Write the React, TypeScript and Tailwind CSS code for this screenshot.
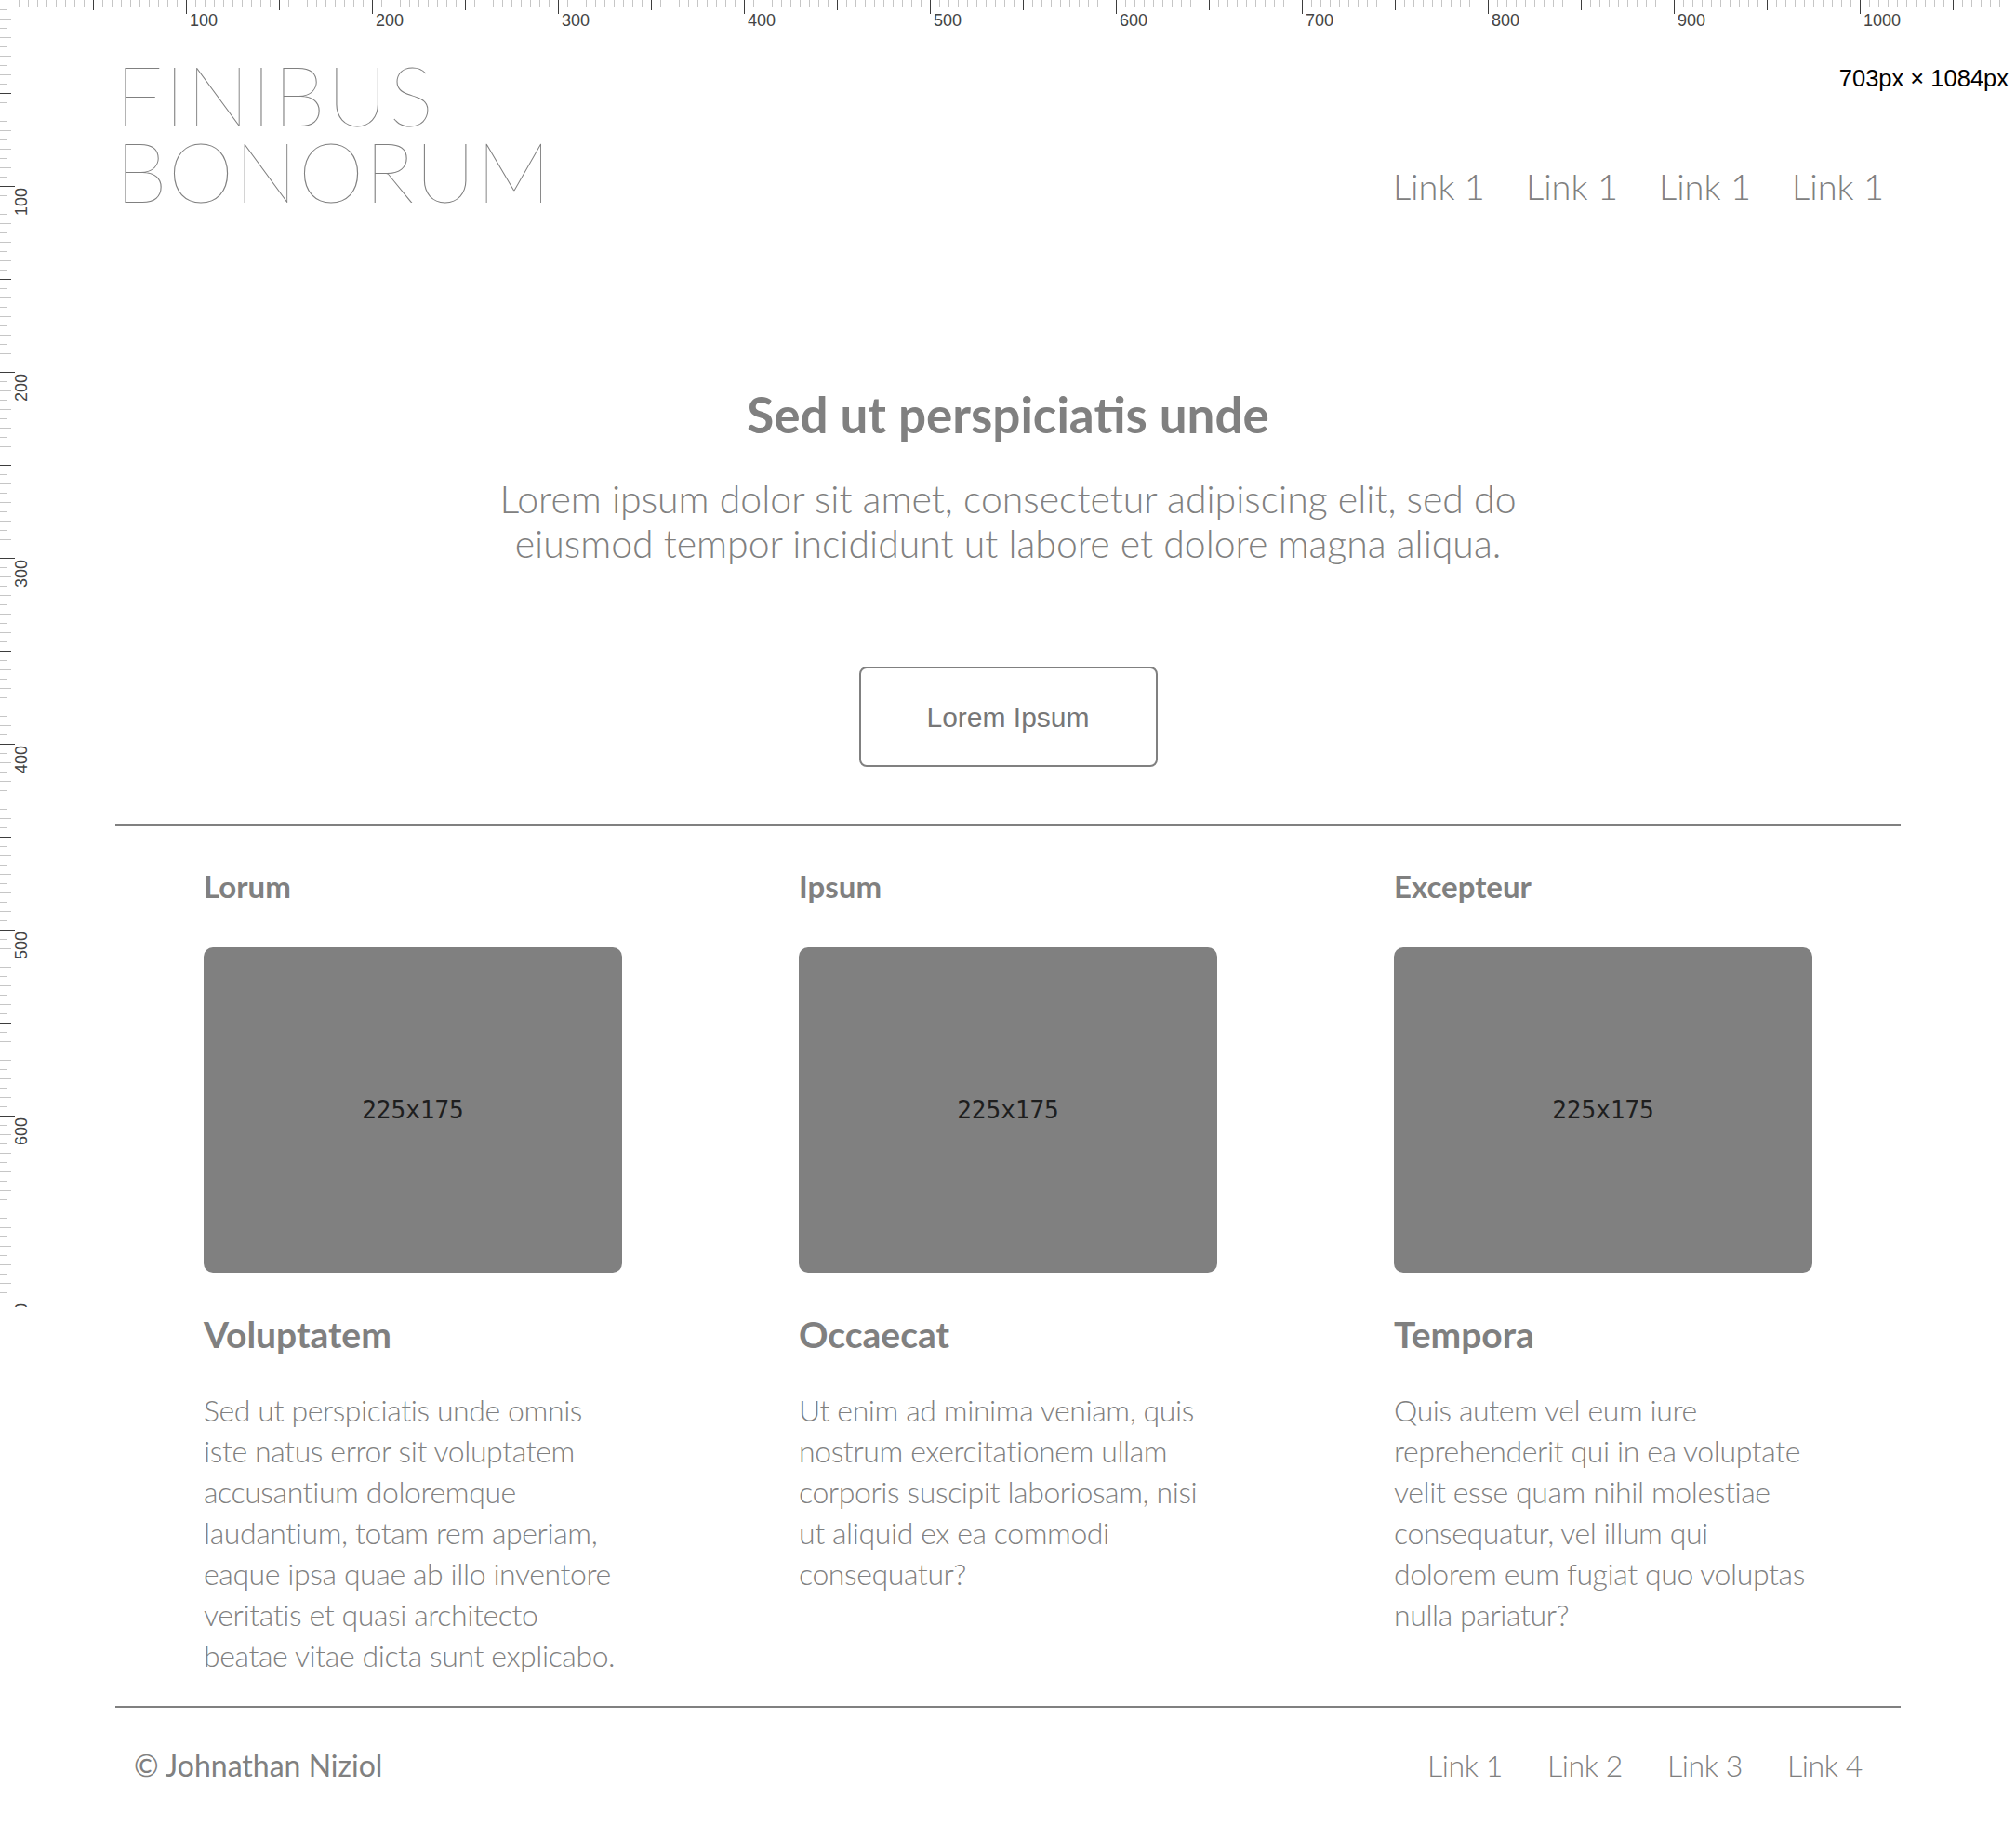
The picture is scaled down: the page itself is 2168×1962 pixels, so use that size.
import React from 'react'

const navLinks = ['Link 1', 'Link 1', 'Link 1', 'Link 1']
const footerLinks = ['Link 1', 'Link 2', 'Link 3', 'Link 4']

const columns = [
  {
    label: 'Lorum',
    title: 'Voluptatem',
    text: 'Sed ut perspiciatis unde omnis iste natus error sit voluptatem accusantium doloremque laudantium, totam rem aperiam, eaque ipsa quae ab illo inventore veritatis et quasi architecto beatae vitae dicta sunt explicabo.',
  },
  {
    label: 'Ipsum',
    title: 'Occaecat',
    text: 'Ut enim ad minima veniam, quis nostrum exercitationem ullam corporis suscipit laboriosam, nisi ut aliquid ex ea commodi consequatur?',
  },
  {
    label: 'Excepteur',
    title: 'Tempora',
    text: 'Quis autem vel eum iure reprehenderit qui in ea voluptate velit esse quam nihil molestiae consequatur, vel illum qui dolorem eum fugiat quo voluptas nulla pariatur?',
  },
]

// dev-tools style rulers drawn over the page
function TopRuler() {
  const ticks = []
  for (let x = 20; x <= 2160; x += 10) {
    const major = x % 200 === 0
    const mid = x % 100 === 0
    ticks.push(
      <line
        key={x}
        x1={x + 0.5}
        x2={x + 0.5}
        y1={0}
        y2={major ? 15 : mid ? 11 : 7}
        stroke={major || mid ? '#3d3d3d' : '#c6c6c6'}
        strokeWidth={1}
      />
    )
    if (major) {
      ticks.push(
        <text key={'t' + x} x={x + 4} y={28} fontSize={18} fill="#444" fontFamily="'Liberation Sans', Arial, sans-serif">
          {x / 2}
        </text>
      )
    }
  }
  return (
    <svg className="absolute top-0 left-0 pointer-events-none" width={2168} height={32}>
      {ticks}
    </svg>
  )
}

function LeftRuler() {
  const ticks = []
  for (let y = 10; y <= 1400; y += 10) {
    const major = y % 200 === 0
    const mid = y % 100 === 0
    const even = y % 20 === 0
    ticks.push(
      <line
        key={y}
        x1={0}
        x2={major ? 16 : mid ? 12 : even ? 12 : 7}
        y1={y + 0.5}
        y2={y + 0.5}
        stroke={major || mid ? '#3d3d3d' : '#c6c6c6'}
        strokeWidth={1}
      />
    )
    if (major) {
      ticks.push(
        <text
          key={'t' + y}
          transform={`translate(29 ${y + 32}) rotate(-90)`}
          fontSize={18}
          fill="#444"
          fontFamily="'Liberation Sans', Arial, sans-serif"
        >
          {y / 2}
        </text>
      )
    }
  }
  return (
    <svg className="absolute top-0 left-0 pointer-events-none" width={34} height={1406}>
      {ticks}
    </svg>
  )
}

export default function App() {
  return (
    <div className="relative min-h-screen bg-white font-['Lato',sans-serif] text-[#808080]">
      <TopRuler />
      <LeftRuler />
      <div className="absolute top-[71px] right-[8px] font-['Liberation_Sans',Arial,sans-serif] text-[25.5px] leading-[26px] text-black">
        703px × 1084px
      </div>

      <div className="mx-[124px] pb-[40px]">
        {/* Header */}
        <header className="flex items-end justify-between pt-[60px]">
          <div className="text-[90px] leading-[82px] font-thin">
            <div className="tracking-[2px]">FINIBUS</div>
            <div className="tracking-[1px]">BONORUM</div>
          </div>
          <nav className="-mr-[4px] flex">
            {navLinks.map((link, i) => (
              <a key={i} href="#" className="px-[22px] text-[38px] leading-[48px] font-light">
                {link}
              </a>
            ))}
          </nav>
        </header>

        {/* Hero */}
        <section className="flex flex-col items-center pt-[191px] pb-[61px] text-center">
          <h1 className="text-[53px] leading-[62px] font-bold">Sed ut perspiciatis unde</h1>
          <p className="mt-[36px] max-w-[1140px] text-[41px] leading-[48px] font-light">
            Lorem ipsum dolor sit amet, consectetur adipiscing elit, sed do eiusmod tempor incididunt ut labore et dolore magna aliqua.
          </p>
          <button className="mt-[108px] h-[108px] w-[321px] rounded-[8px] border-2 border-[#808080] font-['Liberation_Sans',Arial,sans-serif] text-[30px] text-[#777]">
            Lorem Ipsum
          </button>
        </section>

        <hr className="border-t-2 border-[#808080]" />

        {/* Columns */}
        <section className="grid grid-cols-3 pt-[45px] pb-[32px]">
          {columns.map((col) => (
            <div key={col.label} className="pl-[95px]">
              <h4 className="text-[33px] leading-[41px] font-bold">{col.label}</h4>
              <div className="mt-[45px] flex h-[350px] w-[450px] items-center justify-center rounded-[10px] bg-[#808080] font-['DejaVu_Sans_Mono',monospace] text-[26px] text-[#1e1e1e]">
                225x175
              </div>
              <h3 className="mt-[42px] text-[39px] leading-[48px] font-bold">{col.title}</h3>
              <p className="mt-[36px] w-[452px] text-[32px] leading-[44px] font-light tracking-[-0.4px]">{col.text}</p>
            </div>
          ))}
        </section>

        <hr className="border-t-2 border-[#808080]" />

        {/* Footer */}
        <footer className="flex items-center justify-between pt-[40px] pl-[20px] pr-[17px]">
          <span className="text-[32px] leading-[44px] font-normal">© Johnathan Niziol</span>
          <nav className="flex">
            {footerLinks.map((link) => (
              <a key={link} href="#" className="px-[24px] text-[32px] leading-[44px] font-light tracking-[-0.4px]">
                {link}
              </a>
            ))}
          </nav>
        </footer>
      </div>
    </div>
  )
}
